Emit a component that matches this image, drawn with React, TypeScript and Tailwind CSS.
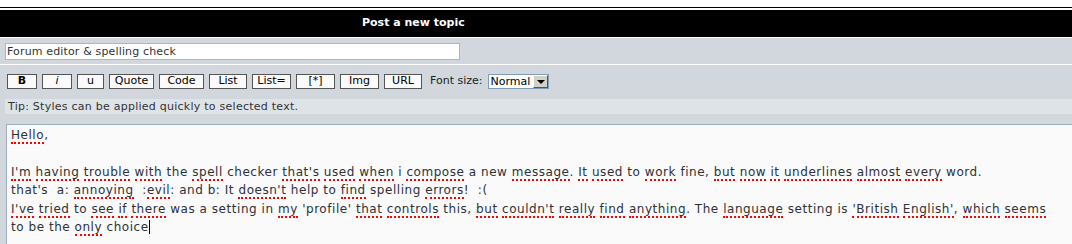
import React from "react";

// phpBB-style "Post a new topic" editor
const buttons: { label: string; w: string; bold?: boolean; italic?: boolean }[] = [
  { label: "B", w: "w-[30px]", bold: true },
  { label: "i", w: "w-[30px]", italic: true },
  { label: "u", w: "w-[27px]" },
  { label: "Quote", w: "w-[45px]" },
  { label: "Code", w: "w-[45px]" },
  { label: "List", w: "w-[38px]" },
  { label: "List=", w: "w-[39px]" },
  { label: "[*]", w: "w-[39px]" },
  { label: "Img", w: "w-[39px]" },
  { label: "URL", w: "w-[38px]" },
];

const lines = [
  "[Hello],",
  "",
  "[I'm] [having] [trouble] [with] the [spell] checker [that's] [used] [when] i [compose] a new [message]. [It] [used] to [work] fine, [but] [now] [it] [underlines] [almost] [every] word.",
  "that's  a: [annoying]  :[evil]: and b: It [doesn't] help to [find] spelling [errors]!  :(",
  "[I've] [tried] to [see] [if] [there] was a setting in [my] 'profile' [that] [controls] this, [but] [couldn't] [really] [find] [anything]. The [language] setting is ['British] [English'], [which] [seems]",
  "to be the [only] choice",
];

function Line({ text, caret }: { text: string; caret?: boolean }) {
  const parts = text.split(/(\[[^\]]+\])/);
  return (
    <div className="h-[18.4px] whitespace-pre">
      {parts.map((p, i) =>
        p.startsWith("[") ? (
          <span key={i} className="border-b-2 border-dotted border-[#f00]">
            {p.slice(1, -1)}
          </span>
        ) : (
          <span key={i}>{p}</span>
        )
      )}
      {caret && <span className="inline-block w-px h-[14px] bg-black align-[-3px]" />}
    </div>
  );
}

export default function App() {
  return (
    <div className="w-[1072px] h-[244px] overflow-hidden bg-white font-['DejaVu_Sans',Verdana,sans-serif]">
      <div className="h-[7px]" />
      <div className="h-px bg-black" />
      <div className="h-[2px]" />
      <div className="h-[27px] bg-black flex items-center pl-[362px] text-[11px] font-bold text-white">
        Post a new topic
      </div>
      <div className="h-px bg-white" />

      {/* subject */}
      <div className="h-[26px] bg-[#d1d7dc] pt-[5px] pl-[5px]">
        <input
          readOnly
          value="Forum editor & spelling check"
          className="block w-[455px] h-[17px] border border-[#a9b8c2] bg-white px-px text-[11px] tracking-[0.15px] text-[#333] outline-none"
        />
      </div>
      <div className="h-px bg-white" />

      {/* toolbar */}
      <div className="bg-[#d1d7dc] pt-[9px] pb-[10px]">
        <div className="flex items-center gap-[5px] pl-[7px] h-[15px] text-[11px] text-black">
          {buttons.map((b) => (
            <div
              key={b.label}
              className={`${b.w} h-[15px] flex items-center justify-center border border-[#555] bg-[#fafafa] ${
                b.bold ? "font-bold" : ""
              } ${b.italic ? "italic" : ""}`}
            >
              {b.label}
            </div>
          ))}
          <span className="ml-[3px] text-[#222]">Font size:</span>
          <div className="ml-[1px] flex h-[15px] w-[61px] border border-[#7f9db9] bg-white">
            <span className="flex-1 pl-px leading-[13px] text-[11px]">Normal</span>
            <span className="flex w-[15px] items-center justify-center border border-t-white border-l-white border-r-[#555] border-b-[#555] bg-[#d4d0c8]">
              <span className="h-0 w-0 border-x-[4px] border-t-[4px] border-x-transparent border-t-black" />
            </span>
          </div>
        </div>
      </div>

      {/* help line */}
      <div className="bg-[#d1d7dc] pl-[5px]">
        <div className="h-[15px] bg-[#dee3e7] pl-[3px] text-[11px] tracking-[0.25px] leading-[15px] text-[#333]">
          Tip: Styles can be applied quickly to selected text.
        </div>
      </div>
      <div className="h-[10px] bg-[#d1d7dc]" />

      {/* message */}
      <div className="bg-[#d1d7dc] pl-[6px] h-[120px]">
        <div className="h-full border-t border-l border-[#9eb0c0] bg-[#fafafa] pl-[4px] pt-px text-[12px] tracking-[0.54px] text-[#2e3138]">
          {lines.map((l, i) => (
            <Line key={i} text={l} caret={i === lines.length - 1} />
          ))}
        </div>
      </div>
    </div>
  );
}
